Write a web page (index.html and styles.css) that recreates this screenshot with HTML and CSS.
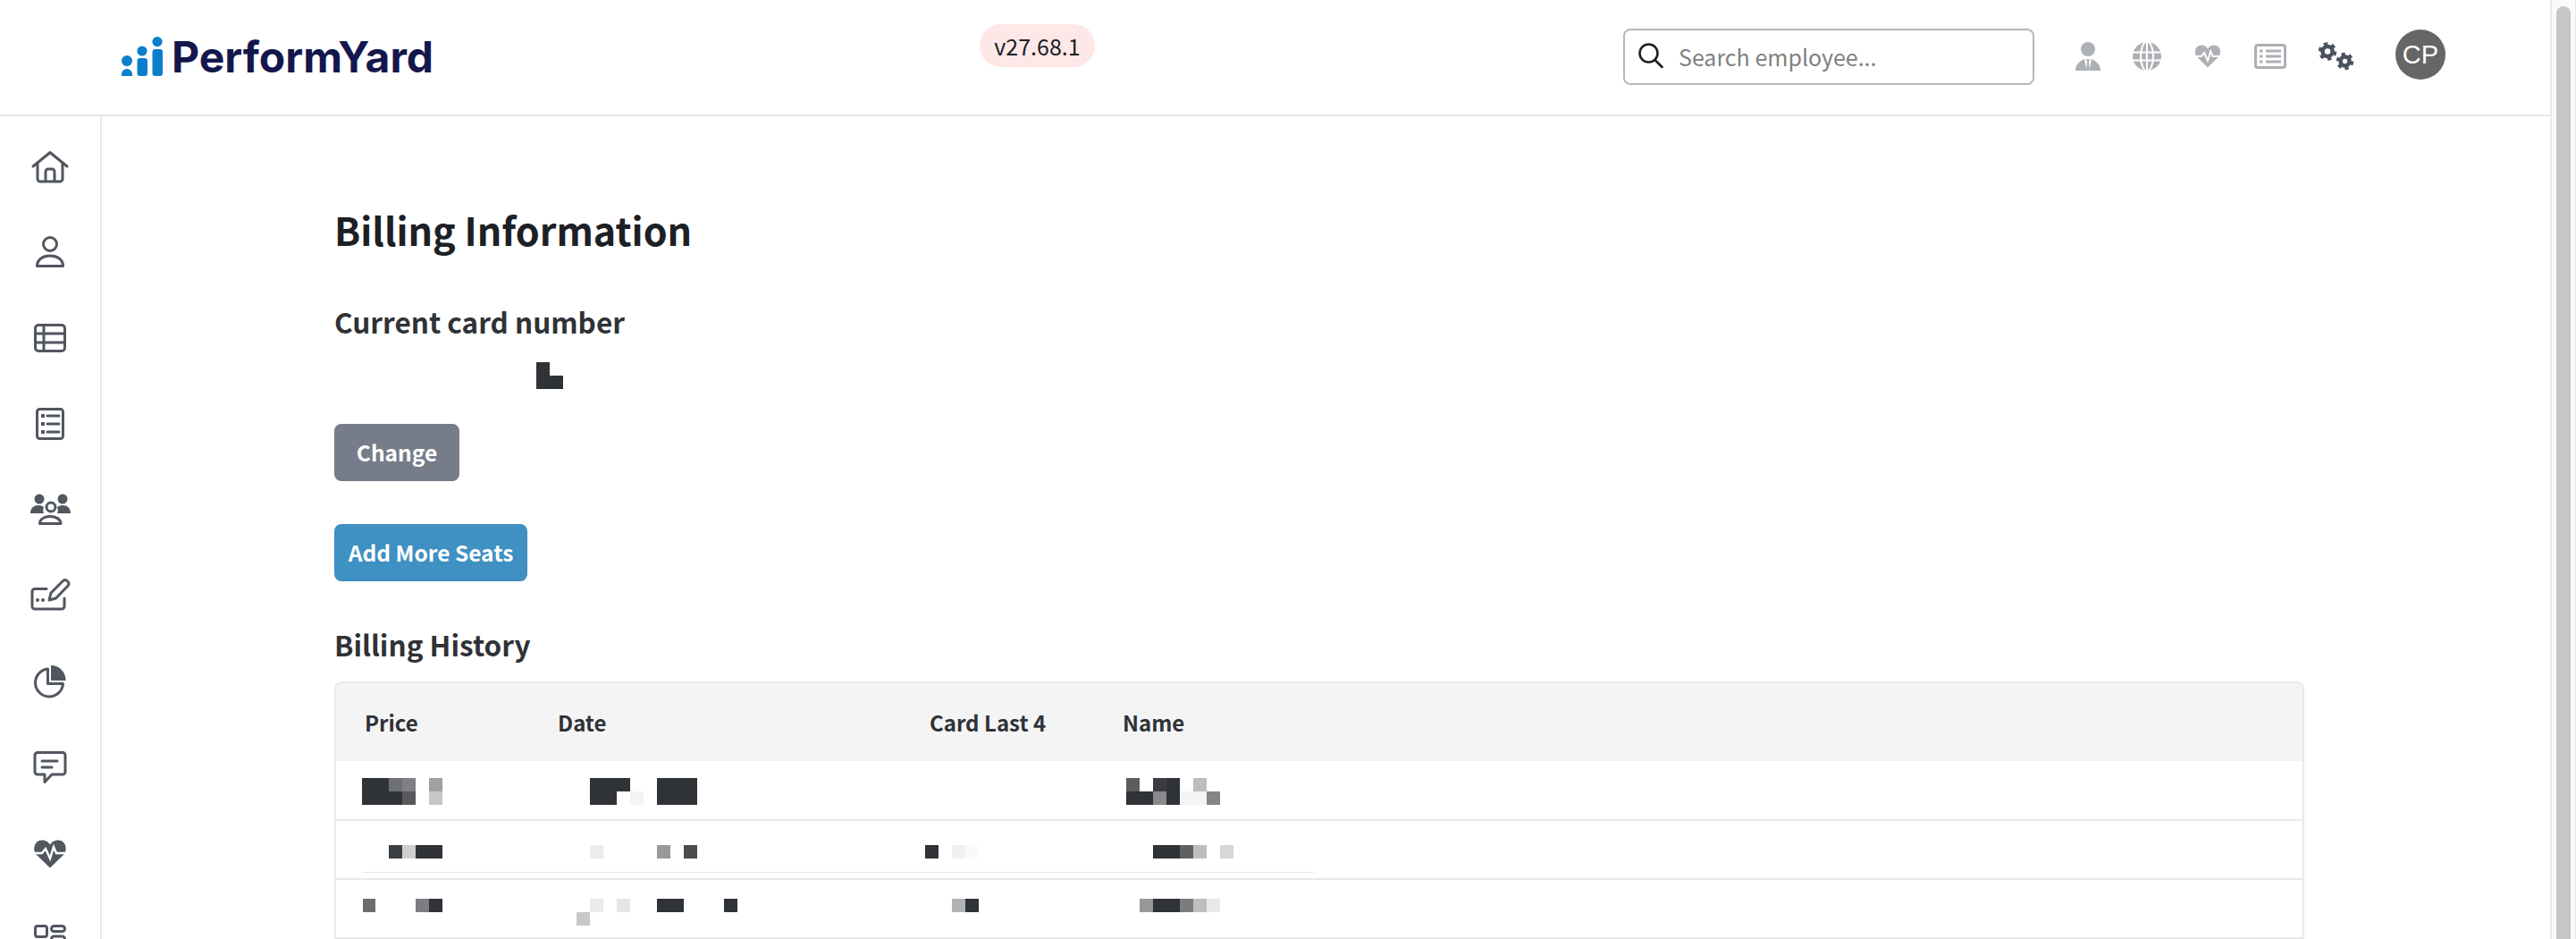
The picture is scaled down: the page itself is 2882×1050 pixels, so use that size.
FILE: index.html
```html
<!DOCTYPE html>
<html lang="en">
<head>
<meta charset="utf-8">
<title>Billing Information</title>
<link rel="stylesheet" href="styles.css">
</head>
<body>
<div class="app">
  <div class="page">
    <header class="topbar">
      <a class="logo">
        <svg class="logo-mark" width="46" height="44" viewBox="0 0 46 44" fill="#0a7fcb">
          <circle cx="6" cy="27" r="6"/>
          <path d="M0 44v-2a6 6 0 0 1 12 0v2z"/>
          <circle cx="23" cy="16" r="5.6"/>
          <rect x="17.5" y="24" width="11.5" height="20" rx="3"/>
          <circle cx="40" cy="5.6" r="5.6"/>
          <rect x="34.5" y="14" width="11.5" height="30" rx="3"/>
        </svg>
        <span class="logo-text">PerformYard</span>
      </a>
      <span class="version">v27.68.1</span>
      <div class="search">
        <svg width="30" height="30" viewBox="0 0 30 30" fill="none" stroke="#1c2025" stroke-width="2.6"><circle cx="12.5" cy="11.5" r="10"/><path d="M19.5 19l8 8" stroke-linecap="round"/></svg>
        <span class="search-text">Search employee...</span>
      </div>
      <svg class="top-icon" width="28" height="32" viewBox="0 0 28 32" fill="#adb0b5"><ellipse cx="14" cy="8" rx="8" ry="8"/><path d="M0 32C0 25 5 21 10 19l2.5 13zM28 32c0-7-5-11-10-13l-2.5 13zM12 19h4l-1 3 1 10h-4l1-10z"/></svg>
      <svg class="top-icon" width="32" height="32" viewBox="0 0 32 32"><circle cx="16" cy="16" r="16" fill="#adb0b5"/><g fill="none" stroke="#fff" stroke-width="2"><ellipse cx="16" cy="16" rx="7" ry="16.5"/><path d="M0 11.5h32M0 20.5h32M16 0v32"/></g></svg>
      <svg class="top-icon" width="32" height="28" viewBox="4 9 40 32"><path fill="#adb0b5" d="M24 40.5L9 26C4 21 6 9.5 15 9.5c4.500 0 7.500 2.500 9 5 1.500-2.500 4.500-5 9-5 9 0 11 11.500 6 16.500z"/><path fill="none" stroke="#fff" stroke-width="2.500" d="M4 25h11l4-5 5 11 4-13 3 7h13"/></svg>
      <svg class="top-icon" width="36" height="28" viewBox="0 0 36 28" fill="none" stroke="#adb0b5" stroke-width="3"><rect x="1.500" y="1.500" width="33" height="25" rx="2.500"/><path d="M13 8h17M13 14h17M13 20h17"/><path d="M6 8h3.500M6 14h3.500M6 20h3.500" stroke-dasharray="3.500"/></svg>
      <svg class="top-icon" width="40" height="32" viewBox="0 0 40 32" fill="none" stroke="#4a5160"><circle cx="10" cy="10.500" r="5.500" stroke-width="4.500"/><circle cx="10" cy="10.500" r="8.500" stroke-width="3.500" stroke-dasharray="4.450"/><circle cx="29.500" cy="21.500" r="5" stroke-width="4.500"/><circle cx="29.500" cy="21.500" r="8" stroke-width="3.500" stroke-dasharray="4.190"/></svg>
      <span class="avatar">CP</span>
    </header>
    <div class="body">
      <nav class="sidebar">
        <a class="nav-item"><svg width="48" height="48" viewBox="0 0 48 48" fill="none" stroke="#51565f" stroke-width="3" stroke-linecap="round" stroke-linejoin="round"><path d="M5 24L24 8.500 43 24"/><path d="M10 21v17a3 3 0 0 0 3 3h22a3 3 0 0 0 3-3V21"/><path d="M19 40V30a3 3 0 0 1 3-3h4a3 3 0 0 1 3 3v10"/></svg></a>
        <a class="nav-item"><svg width="48" height="48" viewBox="0 0 48 48" fill="none" stroke="#51565f" stroke-width="3" stroke-linecap="round" stroke-linejoin="round"><circle cx="24" cy="15" r="7.500"/><path d="M9.500 39.500C9.500 32 16 28 24 28s14.500 4 14.500 11.500z"/></svg></a>
        <a class="nav-item"><svg width="48" height="48" viewBox="0 0 48 48" fill="none" stroke="#51565f" stroke-width="3"><rect x="7.500" y="9.500" width="33" height="29" rx="3.500"/><path d="M7.500 19h33M7.500 29h33M17 9.500v29"/></svg></a>
        <a class="nav-item"><svg width="48" height="48" viewBox="0 0 48 48" fill="none" stroke="#51565f" stroke-width="3"><rect x="9.500" y="7.500" width="29" height="33" rx="3"/><path d="M21 15h13M21 24h13M21 33h13" stroke-linecap="round"/><path d="M14 15h4M14 24h4M14 33h4" stroke-width="4"/></svg></a>
        <a class="nav-item"><svg width="48" height="48" viewBox="0 0 48 48" fill="#51565f" stroke="none"><circle cx="12" cy="12" r="5.500"/><circle cx="38" cy="12" r="5.500"/><path d="M2 28c0-6 4-9 9-9 3.500 0 5 1 6 2.500-1 2-1 4.500 0 6.500zM47 28c0-6-4-9-9-9-3.500 0-5 1-6 2.500 1 2 1 4.500 0 6.500z"/><g fill="none" stroke="#51565f" stroke-width="3" stroke-linejoin="round"><circle cx="25" cy="21" r="5"/><path d="M12.500 39.500c0-5 5-8 11.500-8s12 3 12 8z"/></g></svg></a>
        <a class="nav-item"><svg width="48" height="48" viewBox="0 0 48 48" fill="none" stroke="#51565f" stroke-width="3" stroke-linecap="round" stroke-linejoin="round"><path d="M20 16.500H7a3 3 0 0 0-3 3V36a3 3 0 0 0 3 3h30a3 3 0 0 0 3-3v-9"/><path d="M23 29l2-8 13.500-13.500a3 3 0 0 1 4.500 0l1 1a3 3 0 0 1 0 4.500L30.500 27z"/><circle cx="10" cy="29" r="2" fill="#51565f" stroke="none"/><circle cx="16" cy="29" r="2" fill="#51565f" stroke="none"/></svg></a>
        <a class="nav-item"><svg width="48" height="48" viewBox="0 0 48 48" fill="none" stroke="#51565f" stroke-width="3" stroke-linejoin="round"><path d="M21.500 10A15.500 15.500 0 1 0 38.500 26.500H21.500z"/><path fill="#51565f" stroke="none" d="M25 6a16.500 16.500 0 0 1 16.500 17H25z"/></svg></a>
        <a class="nav-item"><svg width="48" height="48" viewBox="0 0 48 48" fill="none" stroke="#51565f" stroke-width="3" stroke-linejoin="round" stroke-linecap="round"><path d="M10 7.500h28a3 3 0 0 1 3 3V29a3 3 0 0 1-3 3H26l-8 8.500V32h-8a3 3 0 0 1-3-3V10.500a3 3 0 0 1 3-3z"/><path d="M15 17h17M15 24h11"/></svg></a>
        <a class="nav-item"><svg width="48" height="48" viewBox="0 0 48 48"><path fill="#51565f" d="M24 40.500L9 26C4 21 6 9.500 15 9.500c4.500 0 7.500 2.500 9 5 1.500-2.500 4.500-5 9-5 9 0 11 11.500 6 16.500z"/><path fill="none" stroke="#fff" stroke-width="2.500" d="M5 24h10l4-5 5 11 4-13 3 7h12"/></svg></a>
        <a class="nav-item"><svg width="48" height="48" viewBox="0 0 48 48" fill="none" stroke="#51565f" stroke-width="3"><rect x="7.500" y="9.500" width="13" height="12" rx="2.500"/><rect x="25.500" y="9.500" width="15" height="6" rx="3"/><rect x="25.500" y="21" width="15" height="6" rx="3"/><rect x="7.500" y="27" width="13" height="12" rx="2.500"/><rect x="25.500" y="33" width="15" height="6" rx="3"/></svg></a>
      </nav>
      <main class="content">
        <h1 class="title">Billing Information</h1>
        <h2 class="subtitle">Current card number</h2>
        <svg class="card-mosaic" width="30" height="30" viewBox="0 0 30 30" fill="#2f3236"><path d="M0 0h15v15h15v15H0z"/></svg>
        <button class="btn btn-gray">Change</button>
        <button class="btn btn-blue">Add More Seats</button>
        <h2 class="subtitle history">Billing History</h2>
        <section class="table">
          <div class="row head">
            <div class="th">Price</div>
            <div class="th">Date</div>
            <div class="th">Card Last 4</div>
            <div class="th">Name</div>
          </div>
          <div class="row">
            <svg class="cell" height="64" viewBox="0 0 216 64" width="216" shape-rendering="crispEdges"><path fill="#2f3236" d="M29 18h30v15h15v15H29z"/><rect x="59" y="18" width="15" height="15" fill="#6f7073"/><rect x="74" y="18" width="15" height="15" fill="#7e7f82"/><rect x="74" y="33" width="15" height="15" fill="#58595c"/><rect x="104" y="18" width="15" height="15" fill="#a0a0a2"/><rect x="104" y="33" width="15" height="15" fill="#c6c6c7"/></svg>
            <svg class="cell" height="64" viewBox="0 0 416 64" width="416" shape-rendering="crispEdges"><path fill="#2f3236" d="M68 18h45v15H98v15H68zM143 18h45v30h-45z"/><rect x="113" y="33" width="15" height="15" fill="#f3f4f4"/></svg>
            <div class="cell"></div>
            <svg class="cell" height="64" viewBox="0 0 400 64" width="400" shape-rendering="crispEdges"><path fill="#2f3236" d="M36 33h30v15H36zM81 18h15v30H81z"/><rect x="36" y="18" width="15" height="15" fill="#5b5c5f"/><rect x="66" y="18" width="15" height="15" fill="#3a3c40"/><rect x="111" y="18" width="15" height="15" fill="#bebebf"/><rect x="66" y="33" width="15" height="15" fill="#88898b"/><rect x="96" y="33" width="30" height="15" fill="#f3f4f4"/><rect x="126" y="33" width="15" height="15" fill="#848587"/></svg>
          </div>
          <div class="row ruled">
            <svg class="cell" height="64" viewBox="0 0 216 64" width="216" shape-rendering="crispEdges"><rect x="59" y="27" width="15" height="15" fill="#3a3d41"/><rect x="74" y="27" width="15" height="15" fill="#cfcfcf"/><rect x="89" y="27" width="30" height="15" fill="#2f3236"/></svg>
            <svg class="cell" height="64" viewBox="0 0 416 64" width="416" shape-rendering="crispEdges"><rect x="68" y="27" width="15" height="15" fill="#ececec"/><rect x="143" y="27" width="15" height="15" fill="#99999c"/><rect x="173" y="27" width="15" height="15" fill="#4b4c50"/></svg>
            <svg class="cell" height="64" viewBox="0 0 216 64" width="216" shape-rendering="crispEdges"><rect x="27" y="27" width="15" height="15" fill="#2f3236"/><rect x="57" y="27" width="15" height="15" fill="#f0f0f0"/><rect x="72" y="27" width="15" height="15" fill="#fafafa"/></svg>
            <svg class="cell" height="64" viewBox="0 0 400 64" width="400" shape-rendering="crispEdges"><rect x="66" y="27" width="30" height="15" fill="#2f3236"/><rect x="96" y="27" width="15" height="15" fill="#5f6063"/><rect x="111" y="27" width="15" height="15" fill="#bebebf"/><rect x="141" y="27" width="15" height="15" fill="#d7d7d7"/></svg>
          </div>
          <div class="row">
            <svg class="cell" height="64" viewBox="0 0 216 64" width="216" shape-rendering="crispEdges"><rect x="30" y="21" width="14" height="15" fill="#6d6e71"/><rect x="89" y="21" width="15" height="15" fill="#7c7d80"/><rect x="104" y="21" width="15" height="15" fill="#2f3236"/></svg>
            <svg class="cell" height="64" viewBox="0 0 416 64" width="416" shape-rendering="crispEdges"><rect x="68" y="21" width="15" height="15" fill="#ebebeb"/><rect x="98" y="21" width="15" height="15" fill="#e6e6e6"/><rect x="143" y="21" width="30" height="15" fill="#2f3236"/><rect x="218" y="21" width="15" height="15" fill="#2f3236"/><rect x="53" y="36" width="15" height="15" fill="#c8c8ca"/></svg>
            <svg class="cell" height="64" viewBox="0 0 216 64" width="216" shape-rendering="crispEdges"><rect x="57" y="21" width="15" height="15" fill="#b2b2b3"/><rect x="72" y="21" width="15" height="15" fill="#2f3236"/></svg>
            <svg class="cell" height="64" viewBox="0 0 400 64" width="400" shape-rendering="crispEdges"><rect x="51" y="21" width="15" height="15" fill="#98989b"/><rect x="66" y="21" width="30" height="15" fill="#2f3236"/><rect x="96" y="21" width="15" height="15" fill="#7b7c7e"/><rect x="111" y="21" width="15" height="15" fill="#bebebf"/><rect x="126" y="21" width="15" height="15" fill="#e8e8e8"/></svg>
          </div>
        </section>
      </main>
    </div>
  </div>
  <div class="scrollbar"><div class="thumb"></div></div>
</div>
</body>
</html>
```

FILE: styles.css
```css
* { box-sizing: border-box; }
html, body { margin: 0; height: 1050px; overflow: hidden; background: #fff; }
body { font-family: "Noto Sans CJK SC", "Noto Sans", sans-serif; color: #2f3236; }

.app { display: flex; height: 1050px; }
.page { flex: 1; min-width: 0; display: flex; flex-direction: column; }

.topbar {
  height: 130px; flex: none;
  display: flex; align-items: center; gap: 36px;
  padding: 0 117px 2px 136px;
  border-bottom: 2px solid #e9e9e9;
}
.logo { display: flex; align-items: flex-end; gap: 10px; width: 347px; flex: none; }
.logo-mark { flex: none; }
.logo-text {
  font-family: Inter, "Liberation Sans", sans-serif;
  font-weight: 700; font-size: 48px; line-height: 44px; letter-spacing: 0;
  color: #14174d; position: relative; top: 1px;
}
.version {
  margin: 0 auto 24px 577px;
  height: 48px; width: 129px; border-radius: 24px;
  background: #fde8e7; color: #1c2025;
  font-size: 25px; line-height: 48px; text-align: center;
}
.search {
  width: 460px; height: 63px; flex: none; margin-right: 10px;
  border: 2px solid #b4b8be; border-radius: 8px;
  display: flex; align-items: center; gap: 16px; padding: 0 14px;
}
.search-text { font-size: 25px; color: #808080; }
.top-icon { flex: none; }
.avatar {
  width: 56px; height: 56px; border-radius: 50%; flex: none; margin: -5px 0 0 10px;
  background: #666; color: #fff;
  font-family: "Liberation Sans", sans-serif; font-size: 29px; line-height: 56px; text-align: center;
}

.body { flex: 1; display: flex; min-height: 0; }
.sidebar {
  width: 114px; flex: none; border-right: 2px solid #e9e9e9;
  padding-top: 8px; overflow: hidden;
}
.nav-item { display: flex; align-items: center; justify-content: center; height: 96px; }

.content { flex: 1; min-width: 0; padding: 95px 0 0 260px; }
.title { margin: 0; font-size: 43px; line-height: 62px; font-weight: 700; color: #1c2025; }
.subtitle { margin: 50px 0 0; font-size: 31.500px; line-height: 44px; font-weight: 700; color: #2f3236; }
.card-mosaic { display: block; margin: 24px 0 0 226px; }
.btn {
  display: block; height: 64px; padding: 0; border: 0; border-radius: 8px; color: #fff;
  font: 700 24.500px/64px "Noto Sans CJK SC", sans-serif;
}
.btn-gray { width: 140px; margin-top: 39px; background: #767c89; }
.btn-blue { width: 216px; margin-top: 48px; background: #3f90c3; }
.history { margin-top: 48px; }

.table {
  width: 2204px; margin-top: 20px;
  border: 2px solid #e9e9e9; border-bottom: 0; border-radius: 8px 8px 0 0; overflow: hidden;
}
.row {
  display: grid; grid-template-columns: 216px 416px 216px 1fr;
  height: 66px; border-bottom: 2px solid #e9e9e9; position: relative;
}
.row.ruled::after {
  content: ""; position: absolute; left: 30px; top: 57px; width: 1064px; height: 1px; background: #e9e9e9;
}
.head { height: 87px; margin-bottom: 1px; border-bottom: 0; background: #f4f4f4; align-items: center; }
.th { padding-left: 32px; font-size: 24px; font-weight: 700; color: #2f3236; }
.cell { display: block; }

.scrollbar {
  width: 29px; flex: none; display: flex; padding: 7px 5px 0 5px;
  background: #fafafa; border-left: 2px solid #e9e9e9; border-right: 1px solid #e9e9e9;
}
.thumb { flex: 1; background: #c6c6c6; border-radius: 8px 8px 0 0; }
```
